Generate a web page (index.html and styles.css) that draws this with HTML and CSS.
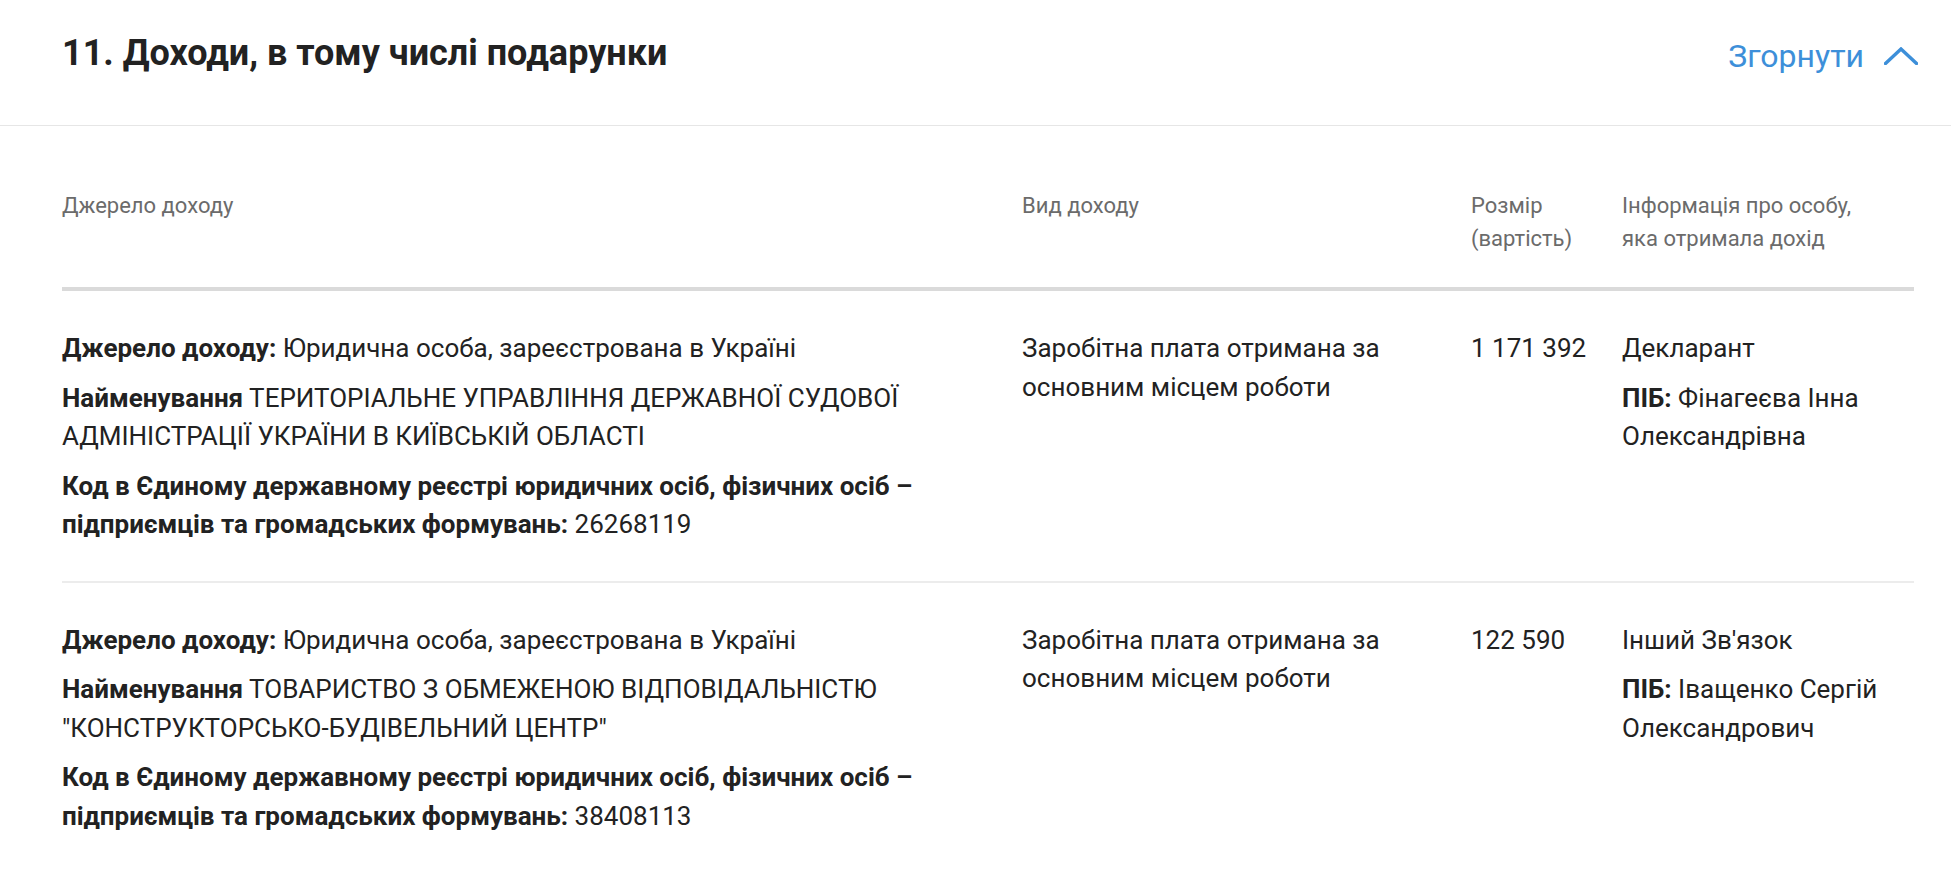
FILE: index.html
```html
<!DOCTYPE html>
<html lang="uk">
<head>
<meta charset="utf-8">
<title>Доходи</title>
<link rel="stylesheet" href="styles.css">
</head>
<body>
<section class="card">
  <header class="card-head">
    <h2 class="card-title">11. Доходи, в тому числі подарунки</h2>
    <a class="toggle" href="#">Згорнути
      <svg class="chevron" width="34" height="18" viewBox="0 0 34 18" aria-hidden="true"><polyline points="1.5,16.5 17,2 32.5,16.5" fill="none" stroke="currentColor" stroke-width="3.4" stroke-linecap="square" stroke-linejoin="miter"/></svg>
    </a>
  </header>
  <div class="table">
    <div class="row row-head">
      <div class="cell">Джерело доходу</div>
      <div class="cell">Вид доходу</div>
      <div class="cell">Розмір (вартість)</div>
      <div class="cell">Інформація про особу, яка отримала дохід</div>
    </div>
    <div class="row">
      <div class="cell">
        <p><b>Джерело доходу:</b> Юридична особа, зареєстрована в Україні</p>
        <p><b>Найменування</b> ТЕРИТОРІАЛЬНЕ УПРАВЛІННЯ ДЕРЖАВНОЇ СУДОВОЇ АДМІНІСТРАЦІЇ УКРАЇНИ В КИЇВСЬКІЙ ОБЛАСТІ</p>
        <p><b>Код в Єдиному державному реєстрі юридичних осіб, фізичних осіб – підприємців та громадських формувань:</b> 26268119</p>
      </div>
      <div class="cell"><p>Заробітна плата отримана за основним місцем роботи</p></div>
      <div class="cell"><p>1 171 392</p></div>
      <div class="cell">
        <p>Декларант</p>
        <p><b>ПІБ:</b> Фінагеєва Інна Олександрівна</p>
      </div>
    </div>
    <div class="row">
      <div class="cell">
        <p><b>Джерело доходу:</b> Юридична особа, зареєстрована в Україні</p>
        <p><b>Найменування</b> ТОВАРИСТВО З ОБМЕЖЕНОЮ ВІДПОВІДАЛЬНІСТЮ "КОНСТРУКТОРСЬКО-БУДІВЕЛЬНИЙ ЦЕНТР"</p>
        <p><b>Код в Єдиному державному реєстрі юридичних осіб, фізичних осіб – підприємців та громадських формувань:</b> 38408113</p>
      </div>
      <div class="cell"><p>Заробітна плата отримана за основним місцем роботи</p></div>
      <div class="cell"><p>122 590</p></div>
      <div class="cell">
        <p>Інший Зв'язок</p>
        <p><b>ПІБ:</b> Іващенко Сергій Олександрович</p>
      </div>
    </div>
  </div>
</section>
</body>
</html>
```

FILE: styles.css
```css
html, body {
  margin: 0;
  padding: 0;
  background: #ffffff;
}

body {
  font-family: Roboto, "Liberation Sans", sans-serif;
  color: #222222;
}

.card-head {
  display: flex;
  justify-content: space-between;
  align-items: flex-start;
  height: 126px;
  box-sizing: border-box;
  padding: 33px 33px 0 62px;
  border-bottom: 1px solid #e6e6e6;
}

.card-title {
  margin: 0;
  font-size: 36px;
  font-weight: 700;
  line-height: 40px;
  color: #222222;
}

.toggle {
  display: flex;
  align-items: center;
  gap: 20px;
  margin-top: 3px;
  font-size: 32px;
  line-height: 40px;
  color: #3d8fd9;
  text-decoration: none;
}

.chevron {
  display: block;
}

.table {
  margin-left: 62px;
  width: 1852px;
}

.row {
  display: grid;
  grid-template-columns: 960px 449px 151px 1fr;
  padding: 38px 0 37px;
  border-bottom: 2px solid #ececec;
}

.row:last-child {
  border-bottom: none;
}

.row-head {
  padding: 63px 0 32px;
  border-bottom: 4px solid #dadada;
  font-size: 22px;
  line-height: 33px;
  color: #6b6b6b;
}

.row-head .cell:last-child {
  padding-right: 30px;
}

.cell {
  padding-right: 20px;
  display: flex;
  flex-direction: column;
  gap: 11px;
}

.cell:last-child {
  padding-right: 0;
}

.row:not(.row-head) .cell {
  font-size: 26px;
  line-height: 38.5px;
}

.cell p {
  margin: 0;
}

.cell b {
  font-weight: 700;
}
```
